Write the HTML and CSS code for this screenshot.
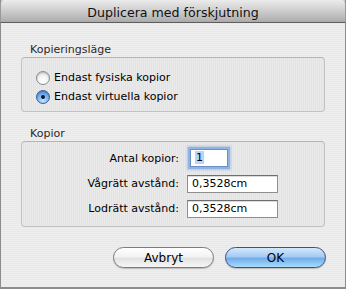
FILE: index.html
```html
<!DOCTYPE html>
<html lang="sv">
<head>
    <meta charset="UTF-8">
    <title>Duplicera med förskjutning</title>
    <link rel="stylesheet" href="styles.css">
</head>
<body>
    <div class="window">
        <div class="titlebar">Duplicera med förskjutning</div>

        <div class="content">
            <div class="group-label">Kopieringsläge</div>
            <div class="group-box radios">
                <label class="radio">
                    <span class="radio-dot"></span>
                    Endast fysiska kopior
                </label>
                <label class="radio checked">
                    <span class="radio-dot"></span>
                    Endast virtuella kopior
                </label>
            </div>

            <div class="group-label second">Kopior</div>
            <div class="group-box fields">
                <span class="field-label">Antal kopior:</span>
                <span class="field"><span class="input small focused"><span class="sel">1</span></span></span>

                <span class="field-label">Vågrätt avstånd:</span>
                <span class="field"><span class="input">0,3528cm</span></span>

                <span class="field-label">Lodrätt avstånd:</span>
                <span class="field"><span class="input">0,3528cm</span></span>
            </div>

            <div class="buttons">
                <button class="btn">Avbryt</button>
                <button class="btn default">OK</button>
            </div>
        </div>
    </div>
</body>
</html>
```

FILE: styles.css
```css
:root {
    --sheet-bg: #ececec;
    --box-bg: #e3e3e3;
    --box-border: #c2c2c2;
    --text: #000;
    --label: #2a2a2a;
}

* {
    box-sizing: border-box;
}

body {
    margin: 0;
    font-family: 'DejaVu Sans', Verdana, sans-serif;
    font-size: 11px;
    color: var(--text);
    background: #fff;
}

.window {
    width: 346px;
    height: 289px;
    border: 1px solid #8c8c8c;
    border-top: none;
    border-bottom-width: 2px;
    background:
        repeating-linear-gradient(0deg, #eeeeee 0, #eeeeee 1px, #e9e9e9 1px, #e9e9e9 2px);
    display: flex;
    flex-direction: column;
}

.titlebar {
    height: 23px;
    padding-top: 3px;
    line-height: 19px;
    text-align: center;
    font-size: 12.6px;
    color: #111;
    border-bottom: 1px solid #5e5e5e;
    background: linear-gradient(#ececec, #d3d3d3 40%, #b6b6b6 85%, #a9a9a9);
    border-radius: 4px 4px 0 0;
    margin: 0 -1px;
    border-left: 1px solid #9a9a9a;
    border-right: 1px solid #9a9a9a;
}

.content {
    padding: 20px 19px 0 20px;
    display: flex;
    flex-direction: column;
}

.group-label {
    line-height: 14px;
    padding-left: 9px;
    color: var(--label);
}

.group-label.second {
    margin-top: 15px;
}

.group-box {
    width: 304px;
    border: 1px solid var(--box-border);
    border-top-color: #b4b4b4;
    border-radius: 4px;
    background:
        repeating-linear-gradient(90deg, rgba(255, 255, 255, 0.25) 0, rgba(255, 255, 255, 0.25) 1px, transparent 1px, transparent 2px),
        var(--box-bg);
}

.radios {
    height: 55px;
    padding: 10px 0 0 14px;
}

.radio {
    display: flex;
    align-items: center;
    gap: 4px;
    height: 19px;
}

.radio-dot {
    width: 14px;
    height: 14px;
    border-radius: 50%;
    border: 1px solid #8a8a8a;
    background: radial-gradient(circle at 50% 75%, #ffffff 0, #f4f4f4 45%, #cfcfcf 100%);
    box-shadow: inset 0 1px 1px rgba(0, 0, 0, 0.15);
    position: relative;
}

.radio.checked .radio-dot {
    border-color: #3c5d93;
    background: radial-gradient(circle at 50% 80%, #c4e3ff 0, #7fb7ef 45%, #3d7ed8 100%);
}

.radio.checked .radio-dot::after {
    content: "";
    position: absolute;
    left: 4px;
    top: 4px;
    width: 4px;
    height: 4px;
    border-radius: 50%;
    background: #0e1a33;
}

.fields {
    height: 86px;
    padding: 4px 0;
    display: grid;
    grid-template-columns: 157px 1fr;
    grid-auto-rows: 25px;
    column-gap: 8px;
    align-items: center;
}

.field-label {
    text-align: right;
}

.field {
    display: flex;
}

.input {
    width: 91px;
    height: 18px;
    line-height: 16px;
    padding-left: 4px;
    background: #fff;
    border: 1px solid #8e8e8e;
    border-top-color: #6e6e6e;
    box-shadow: inset 0 1px 0 #dcdcdc;
}

.input.small {
    width: 38px;
    margin-left: 3px;
    margin-top: -1px;
}

.input.focused {
    border-color: #6c90c3;
    box-shadow: 0 0 0 2px #8fb3e3, 0 0 2px 3px rgba(120, 160, 220, 0.45);
}

.sel {
    background: #b5d5ff;
    padding: 0 1px;
}

.buttons {
    margin-top: 20px;
    display: flex;
    justify-content: flex-end;
    gap: 11px;
    width: 305px;
}

.btn {
    width: 101px;
    height: 21px;
    border-radius: 11px;
    border: 1px solid #7b7b7b;
    font-family: inherit;
    font-size: 12px;
    color: #000;
    padding: 0;
    background: linear-gradient(#ffffff, #f3f3f3 45%, #e2e2e2 55%, #f6f6f6);
    box-shadow: 0 1px 1px rgba(0, 0, 0, 0.2);
}

.btn.default {
    border-color: #3f4f86;
    background: linear-gradient(#d4e8fb, #a6cbf2 45%, #72adeb 55%, #a8dcfb);
}
```
